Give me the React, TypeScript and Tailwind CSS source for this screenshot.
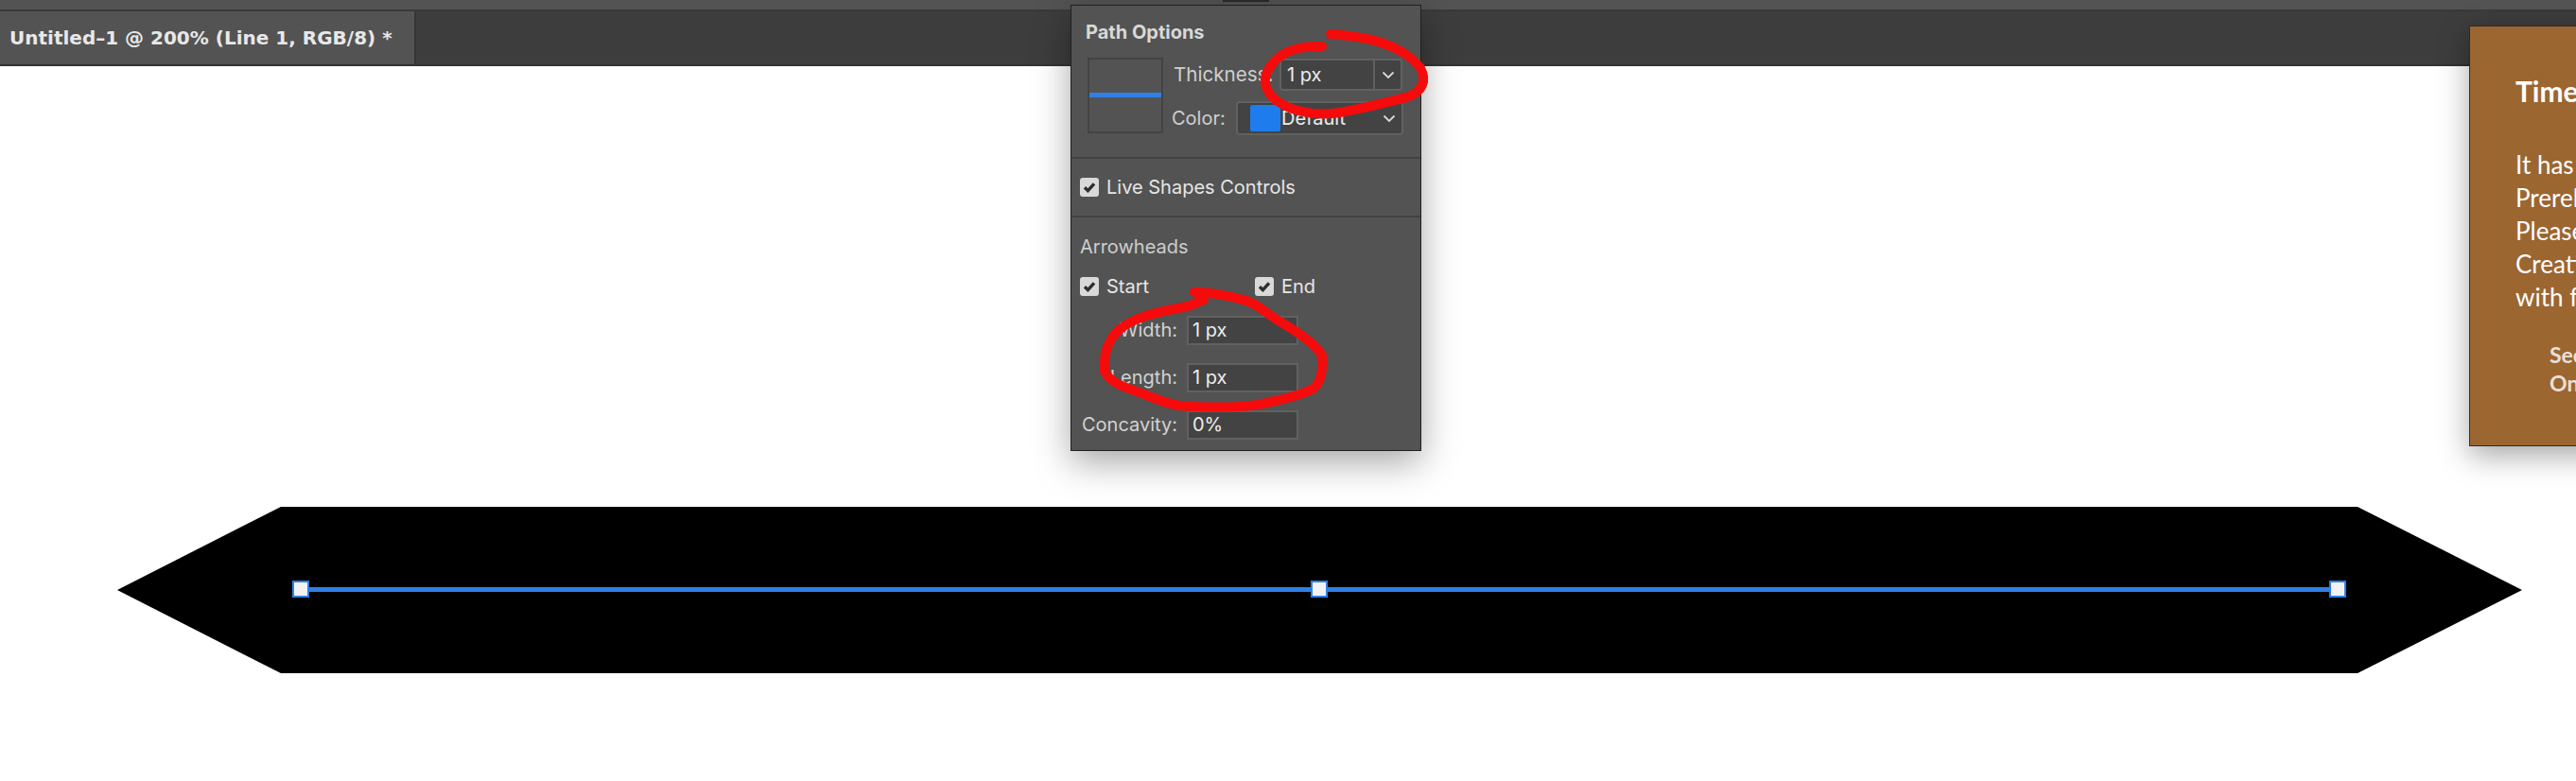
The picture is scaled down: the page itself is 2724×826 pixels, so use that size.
import React from "react";

const Checkmark = () => (
  <span className="flex h-5 w-5 shrink-0 items-center justify-center rounded-[3px] bg-[#d9d9d9]">
    <svg width="14" height="12" viewBox="0 0 14 12" fill="none">
      <path d="M2 6.2 L5.4 9.6 L12 2.4" stroke="#2e2e2e" strokeWidth="3.4" />
    </svg>
  </span>
);

const Chevron = () => (
  <svg width="14" height="9" viewBox="0 0 14 9" fill="none">
    <path d="M1.5 1.5 L7 7 L12.5 1.5" stroke="#d8d8d8" strokeWidth="1.8" />
  </svg>
);

const Field = ({ label, value }: { label: string; value: string }) => (
  <div className="flex h-[30px] items-center">
    <span className="w-[112px] text-right text-[#d2d2d2]">{label}</span>
    <span className="ml-[10px] flex h-[31px] w-[118px] items-center border-2 border-[#616161] bg-[#434343] pl-[4px] text-[#ededed]">
      {value}
    </span>
  </div>
);

const Handle = () => (
  <span className="h-[18px] w-[18px] shrink-0 border-[2px] border-[#2f7fe6] bg-[#f2f2f2]" />
);

export default function App() {
  return (
    <div className="relative flex h-[826px] w-[2724px] flex-col overflow-hidden bg-white font-['Inter',sans-serif]">
      <div className="h-[10px] shrink-0 bg-[#535353]" />
      <div className="h-[2px] shrink-0 bg-[#3a3a3a]" />
      <div className="flex h-[56px] shrink-0 bg-[#3d3d3d]">
        <div className="flex w-[440px] items-center border-r-2 border-[#363636] bg-[#535353] pl-[10px] font-['DejaVu_Sans',sans-serif] text-[20px] font-bold whitespace-nowrap text-[#e8e8e8]">
          Untitled–1 @ 200% (Line 1, RGB/8) *
        </div>
      </div>
      <div className="h-[2px] shrink-0 bg-[#333333]" />

      <div className="relative flex-1">
        <div className="absolute top-[466px] left-[124px] h-[176px] w-[2543px] bg-black [clip-path:polygon(0_50%,173px_0,2369px_0,100%_50%,2369px_100%,173px_100%)]" />
        <div className="absolute top-[544px] left-[309px] flex w-[2172px] items-center justify-between">
          <Handle />
          <span className="h-[5px] flex-1 bg-[#2f7fe6]" />
          <Handle />
          <span className="h-[5px] flex-1 bg-[#2f7fe6]" />
          <Handle />
        </div>
      </div>

      {/* Path Options popup */}
      <div className="absolute top-[0px] left-[1293px] h-[2px] w-[49px] bg-[#2a2a2a]" />
      <div className="absolute top-[5px] left-[1132px] flex h-[472px] w-[371px] flex-col border border-[#1f1f1f] bg-[#535353] text-[20px] shadow-[0_12px_36px_rgba(0,0,0,0.35)]">
        <div className="h-[162px] shrink-0 border-b-2 border-[#424242] pt-[14px]">
          <div className="pl-[15px] text-[20px] leading-[28px] font-bold text-[#d8d8d8]">Path Options</div>
          <div className="mt-[13px] flex">
            <div className="ml-[17px] flex h-[80px] w-[80px] items-center border-2 border-[#434343]">
              <span className="mt-[-2px] h-[5px] w-full bg-[#2f7fe6]" />
            </div>
            <div className="ml-[9px] flex flex-col">
              <div className="flex h-[36px] items-center">
                <span className="ml-[2px] w-[112px] text-[20.6px] whitespace-nowrap text-[#cfcfcf]">Thickness:</span>
                <div className="flex h-[34px] w-[130px] items-center rounded-[4px] border-2 border-[#616161] bg-[#434343] text-[#ededed]">
                  <span className="flex-1 pl-[6px]">1 px</span>
                  <span className="flex h-full w-[29px] items-center justify-center border-l-2 border-[#616161]">
                    <Chevron />
                  </span>
                </div>
              </div>
              <div className="mt-[10px] flex h-[36px] items-center">
                <span className="w-[68px] text-[#cfcfcf]">Color:</span>
                <div className="flex h-[36px] w-[177px] items-center rounded-[4px] border-2 border-[#616161] bg-[#434343] pl-[13px] text-[#ededed]">
                  <span className="h-[28px] w-[32px] rounded-[2px] bg-[#1f7ced]" />
                  <span className="ml-[1px] flex-1">Default</span>
                  <span className="mr-[6px]">
                    <Chevron />
                  </span>
                </div>
              </div>
            </div>
          </div>
        </div>

        <div className="flex h-[62px] shrink-0 items-center gap-[8px] border-b-2 border-[#424242] pl-[9px] text-[#e6e6e6]">
          <Checkmark />
          <span>Live Shapes Controls</span>
        </div>

        <div className="flex-1 pt-[17px]">
          <div className="pl-[9px] leading-[28px] text-[#cdcdcd]">Arrowheads</div>
          <div className="mt-[18px] flex h-[20px] items-center pl-[9px] text-[#e6e6e6]">
            <span className="flex w-[185px] items-center gap-[8px]">
              <Checkmark />
              Start
            </span>
            <span className="flex items-center gap-[8px]">
              <Checkmark />
              End
            </span>
          </div>
          <div className="mt-[21px] flex flex-col gap-[20px]">
            <Field label="Width:" value="1 px" />
            <Field label="Length:" value="1 px" />
            <Field label="Concavity:" value="0%" />
          </div>
        </div>
      </div>

      {/* Notification */}
      <div className="absolute top-[27px] left-[2611px] h-[445px] w-[160px] border border-[#2a2a2a] bg-[#9c6631] pt-[48px] pl-[48px] font-['Lato',sans-serif] whitespace-nowrap text-white shadow-[0_10px_30px_rgba(0,0,0,0.35)]">
        <div className="text-[30px] leading-[40px] font-bold">Time is</div>
        <div className="mt-[41px] text-[26px] leading-[35px]">
          <div>It has been</div>
          <div>Prerelease</div>
          <div>Please</div>
          <div>Creative</div>
          <div>with free</div>
        </div>
        <div className="mt-[28px] ml-[36px] text-[23px] leading-[30px] font-bold text-[#e9dfd9]">
          <div>Second</div>
          <div>Online</div>
        </div>
      </div>

      {/* Hand-drawn red annotations */}
      <svg className="absolute top-0 left-0" width="2724" height="826" fill="none">
        <path
          d="M1398 49 C1375 48 1355 54 1345 68 C1335 80 1336 92 1345 102 C1358 116 1385 122 1408 120 C1435 117 1465 108 1487 103 C1505 97 1509 85 1502 72 C1490 55 1465 45 1445 41 C1430 38 1420 37 1407 36"
          stroke="#f50b0b"
          strokeWidth="10"
          strokeLinecap="round"
        />
        <path
          d="M1273 317 C1262 322 1255 325 1240 327 C1215 332 1195 338 1182 350 C1170 362 1167 378 1168 392 C1172 404 1190 410 1210 417 C1228 424 1240 430 1262 430 C1285 431 1310 431 1330 428 C1350 424 1378 418 1390 410 C1398 402 1399 388 1398 376 C1390 362 1370 350 1350 338 C1335 328 1325 318 1310 316 C1295 312 1280 309 1263 309"
          stroke="#f50b0b"
          strokeWidth="10"
          strokeLinecap="round"
        />
      </svg>
    </div>
  );
}
